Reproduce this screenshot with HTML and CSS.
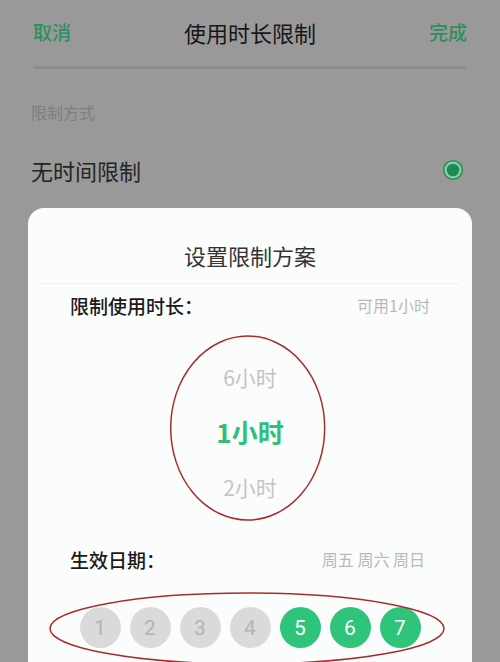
FILE: index.html
```html
<!DOCTYPE html>
<html lang="zh-CN">
<head>
<meta charset="utf-8">
<title>使用时长限制</title>
<link rel="stylesheet" href="styles.css">
</head>
<body>
<div class="page">
  <header class="header">
    <span class="action">取消</span>
    <span class="title">使用时长限制</span>
    <span class="action">完成</span>
  </header>
  <div class="divider"></div>
  <div class="section-label">限制方式</div>
  <div class="option">
    <span class="option-text">无时间限制</span>
    <svg class="radio" width="22" height="22" viewBox="0 0 22 22">
      <circle cx="11" cy="11" r="9.3" fill="#8fcfac" stroke="#2b8d5c" stroke-width="1.6"/>
      <circle cx="11" cy="11" r="6.3" fill="#1f8a55"/>
    </svg>
  </div>

  <section class="dialog">
    <div class="dialog-title">设置限制方案</div>
    <div class="row">
      <span class="row-label">限制使用时长：</span>
      <span class="row-value">可用1小时</span>
    </div>
    <div class="picker">
      <div class="pick">6小时</div>
      <div class="pick active">1小时</div>
      <div class="pick">2小时</div>
    </div>
    <div class="row">
      <span class="row-label">生效日期：</span>
      <span class="row-value days-value">周五 周六 周日</span>
    </div>
    <div class="days">
      <span class="day">1</span>
      <span class="day">2</span>
      <span class="day">3</span>
      <span class="day">4</span>
      <span class="day on">5</span>
      <span class="day on">6</span>
      <span class="day on">7</span>
    </div>
  </section>

  <svg class="marks" width="500" height="662" viewBox="0 0 500 662">
    <ellipse cx="247.7" cy="428" rx="77" ry="92" fill="none" stroke="#a92c2c" stroke-width="1.5"/>
    <ellipse cx="247" cy="628.5" rx="197" ry="35.5" fill="none" stroke="#a92c2c" stroke-width="1.5"/>
  </svg>
</div>
</body>
</html>
```

FILE: styles.css
```css
html, body {
  margin: 0;
  padding: 0;
}
body {
  background: #999999;
  font-family: "Noto Sans CJK SC", "Noto Sans", sans-serif;
}
.page {
  position: relative;
  width: 500px;
  height: 662px;
  overflow: hidden;
  background: #999999;
}
.header {
  height: 63px;
  padding: 0 33px 3px;
  display: flex;
  align-items: center;
  justify-content: space-between;
}
.action {
  font-size: 19px;
  font-weight: 500;
  color: #2e8f5e;
}
.title {
  font-size: 22px;
  color: #161616;
}
.divider {
  height: 3px;
  margin: 0 33px;
  background: #8c8c8c;
}
.section-label {
  margin: 32px 0 0 31px;
  font-size: 16px;
  line-height: 22px;
  color: #7e7e7e;
}
.option {
  margin-top: 32px;
  padding: 0 36px 0 31px;
  height: 30px;
  display: flex;
  align-items: center;
  justify-content: space-between;
}
.option-text {
  font-size: 22px;
  color: #242424;
}
.radio {
  display: block;
}
.dialog {
  margin: 23px 28px 0;
  height: 460px;
  background: #fbfdfd;
  border-radius: 16px 16px 0 0;
}
.dialog-title {
  padding: 31px 0 12px;
  margin: 0 12px;
  line-height: 32px;
  text-align: center;
  font-size: 22px;
  color: #333333;
  border-bottom: 1px solid #eef2f2;
}
.row {
  height: 42px;
  padding: 0 42px;
  display: flex;
  align-items: center;
  justify-content: space-between;
}
.row-label {
  font-size: 19px;
  font-weight: 500;
  color: #1a1a1a;
}
.row-value {
  font-size: 16px;
  color: #b9b9b9;
}
.days-value {
  margin-right: 5px;
}
.picker {
  padding: 23px 0 24px;
  display: flex;
  flex-direction: column;
  align-items: center;
}
.pick {
  height: 55px;
  display: flex;
  align-items: center;
  justify-content: center;
  font-size: 21px;
  color: #c4c4c4;
}
.pick.active {
  font-size: 26px;
  font-weight: 700;
  color: #2fbf78;
}
.days {
  margin-top: 27px;
  display: flex;
  justify-content: center;
  gap: 9px;
}
.day {
  width: 41px;
  height: 41px;
  border-radius: 50%;
  background: #dadada;
  color: #b4b4b4;
  font-family: "Roboto", "Noto Sans", sans-serif;
  font-size: 21px;
  display: flex;
  align-items: center;
  justify-content: center;
}
.day.on {
  background: #2ec57a;
  color: #ffffff;
}
.marks {
  position: absolute;
  left: 0;
  top: 0;
  pointer-events: none;
}
```
